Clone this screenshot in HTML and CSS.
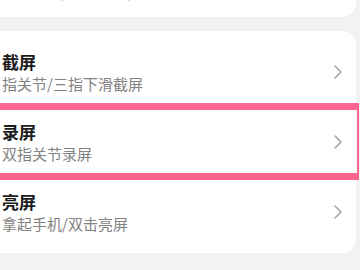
FILE: index.html
```html
<!DOCTYPE html>
<html lang="zh-CN">
<head>
    <meta charset="UTF-8">
    <meta name="viewport" content="width=device-width, initial-scale=1.0">
    <title>手势设置</title>
    <link rel="stylesheet" href="styles.css">
</head>
<body>
    <div class="screen">
        <div class="card card-top">
            <div class="row">
                <div class="row-text">
                    <div class="row-title">隔空手势</div>
                    <div class="row-sub">隔空截屏/隔空滑屏/隔空按压</div>
                </div>
            </div>
        </div>

        <div class="card">
            <div class="row">
                <div class="row-text">
                    <div class="row-title">截屏</div>
                    <div class="row-sub">指关节/三指下滑截屏</div>
                </div>
                <svg class="chevron" viewBox="0 0 10 16" width="10" height="16">
                    <path d="M2 2 L8 8 L2 14" fill="none" stroke="#a3a3a3" stroke-width="1.6" stroke-linecap="round" stroke-linejoin="round"/>
                </svg>
            </div>
            <div class="row row-marked">
                <div class="row-text">
                    <div class="row-title">录屏</div>
                    <div class="row-sub">双指关节录屏</div>
                </div>
                <svg class="chevron" viewBox="0 0 10 16" width="10" height="16">
                    <path d="M2 2 L8 8 L2 14" fill="none" stroke="#a3a3a3" stroke-width="1.6" stroke-linecap="round" stroke-linejoin="round"/>
                </svg>
                <div class="mark"></div>
            </div>
            <div class="row">
                <div class="row-text">
                    <div class="row-title">亮屏</div>
                    <div class="row-sub">拿起手机/双击亮屏</div>
                </div>
                <svg class="chevron" viewBox="0 0 10 16" width="10" height="16">
                    <path d="M2 2 L8 8 L2 14" fill="none" stroke="#a3a3a3" stroke-width="1.6" stroke-linecap="round" stroke-linejoin="round"/>
                </svg>
            </div>
        </div>
    </div>
</body>
</html>
```

FILE: styles.css
```css
* {
    margin: 0;
    padding: 0;
    box-sizing: border-box;
}

html, body {
    height: 100%;
    overflow: hidden;
}

body {
    background: #f1f2f4;
    font-family: "Noto Sans CJK SC", "Noto Sans", sans-serif;
}

.screen {
    display: flex;
    flex-direction: column;
    gap: 14px;
    width: 372px;
    margin-left: -16px;
    margin-top: -61px;
}

.card {
    background: #fff;
    border-radius: 14px;
    padding: 6px 0;
}

.card-top {
    padding-bottom: 2px;
}

.row {
    position: relative;
    height: 70px;
    display: flex;
    align-items: center;
    justify-content: space-between;
    padding: 0 13px 0 18px;
}

.row-title {
    font-size: 17px;
    line-height: 23px;
    font-weight: 700;
    color: #1c1c1c;
}

.row-sub {
    font-size: 15px;
    line-height: 21px;
    color: #828282;
}

.chevron {
    flex-shrink: 0;
}

.mark {
    position: absolute;
    top: -4px;
    bottom: -3px;
    left: -10px;
    right: -3px;
    border-top: 7px solid #fe6591;
    border-bottom: 7px solid #fe6591;
    border-right: 2px solid #fe6591;
    pointer-events: none;
}
```
